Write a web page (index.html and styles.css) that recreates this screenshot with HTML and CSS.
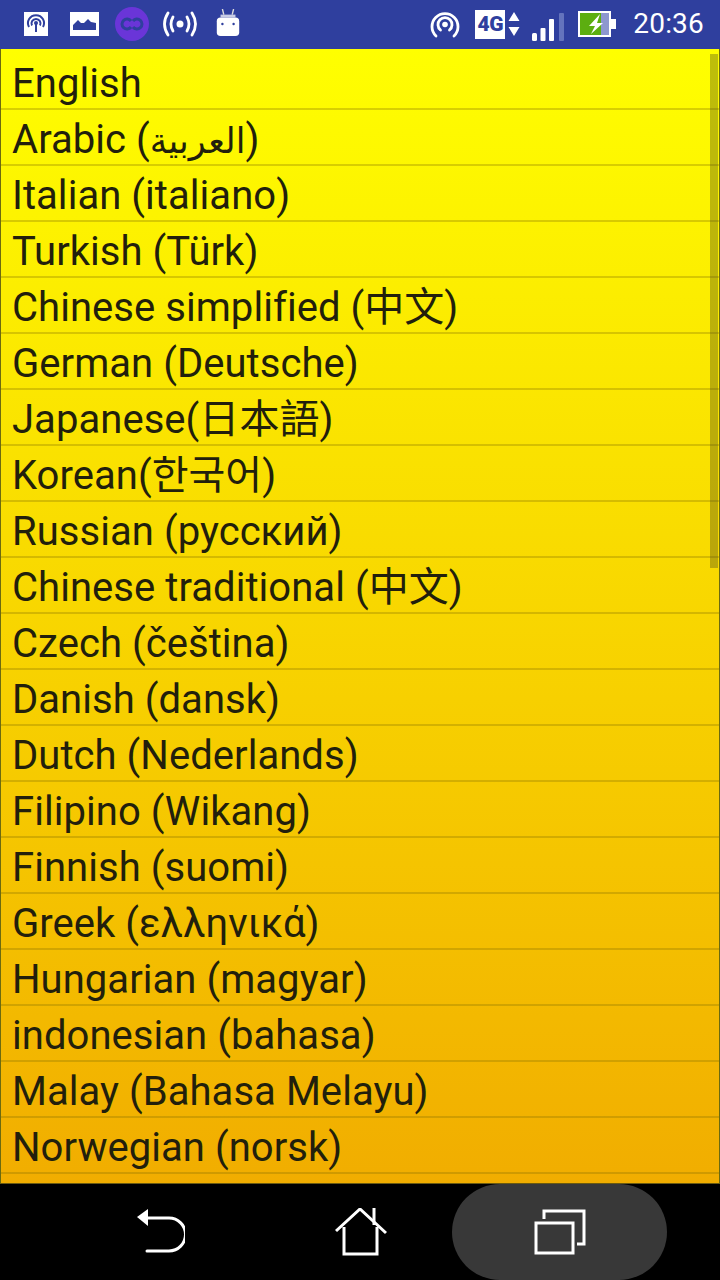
FILE: index.html
```html
<!DOCTYPE html>
<html lang="en">
<head>
<meta charset="utf-8">
<title>Languages</title>
<link rel="stylesheet" href="styles.css">
</head>
<body>
<div class="phone">
  <header class="status">
    <div class="status-left">
      <svg class="ic i1" viewBox="0 0 24 24"><rect width="24" height="24" fill="#fff"/><g fill="none" stroke="#2f3f9e" stroke-width="2"><path d="M5 15a8 8 0 1 1 14 0"/><path d="M8 13.500a4.500 4.500 0 1 1 8 0"/></g><circle cx="12" cy="11" r="2" fill="#2f3f9e"/><rect x="11" y="11" width="2" height="9" fill="#2f3f9e"/></svg>
      <svg class="ic i2" viewBox="0 0 29 24"><rect width="29" height="24" fill="#fff"/><path d="M3 18v-5l5-5 3 3h3l4-4 3 3 5 1v7z" fill="#2f3f9e"/></svg>
      <svg class="ic i3" viewBox="0 0 34 34"><circle cx="17" cy="17" r="17" fill="#6a35d8"/><g fill="none" stroke="#2f3f9e" stroke-width="3"><path d="M16 14a5 5 0 1 0 0 6"/><path d="M18 20a5 5 0 1 0 0-6"/></g></svg>
      <svg class="ic i4" viewBox="0 0 34 26"><circle cx="17" cy="13" r="3.500" fill="#fff"/><g fill="none" stroke="#fff" stroke-width="2.800" stroke-linecap="round"><path d="M10 6q-4 7 0 14"/><path d="M24 6q4 7 0 14"/><path d="M5 2q-7 11 0 22"/><path d="M29 2q7 11 0 22"/></g></svg>
      <svg class="ic i5" viewBox="0 0 24 30"><path d="M6 0l1.500 6M18 0l-1.500 6" stroke="#ddd" stroke-width="1.500"/><path d="M4 6h16v3H4z" fill="#c9cde6"/><path d="M0 13a4 4 0 0 1 4-4h16a4 4 0 0 1 4 4v12a4 4 0 0 1-4 4H4a4 4 0 0 1-4-4z" fill="#fff"/><circle cx="6" cy="16" r="1.300" fill="#2f3f9e"/><circle cx="18" cy="16" r="1.300" fill="#2f3f9e"/></svg>
    </div>
    <div class="status-right">
      <svg class="ic r1" viewBox="0 0 30 28"><g fill="none" stroke="#fff" stroke-width="2.800" stroke-linecap="round"><path d="M6 26a13 13 0 1 1 18 0"/><path d="M10.500 20a7 7 0 1 1 9 0"/></g><circle cx="15" cy="14.500" r="2.800" fill="#fff"/></svg>
      <span class="net">4G</span>
      <svg class="ic r2" viewBox="0 0 12 24"><path d="M6 0l5.500 9H.5zM6 24l5.500-9H.5z" fill="#fff"/></svg>
      <svg class="ic r3" viewBox="0 0 32 28"><g fill="#fff"><rect x="0" y="20" width="5" height="8" rx="1.500"/><rect x="8.500" y="15" width="5" height="13" rx="1"/><rect x="17" y="6" width="5" height="22" rx="1"/></g><rect x="27" y="0" width="5" height="28" rx="1" fill="#6473bd"/></svg>
      <svg class="ic r4" viewBox="0 0 38 26"><rect x="1" y="1" width="31" height="24" fill="#8d97cf" stroke="#fff" stroke-width="2"/><rect x="2" y="2" width="21" height="22" fill="#5cae10"/><rect x="32" y="8" width="6" height="10" fill="#fff"/><path d="M22 3L11 15h6l-4 8 12-11h-6z" fill="#fff"/></svg>
      <span class="time">20:36</span>
    </div>
  </header>
  <main class="panel">
    <ul class="list">
      <li>English</li>
      <li>Arabic (<span class="ar">العربية</span>)</li>
      <li>Italian (italiano)</li>
      <li>Turkish (Türk)</li>
      <li>Chinese simplified (中文)</li>
      <li>German (Deutsche)</li>
      <li>Japanese(日本語)</li>
      <li>Korean(한국어)</li>
      <li>Russian (русский)</li>
      <li>Chinese traditional (中文)</li>
      <li>Czech (čeština)</li>
      <li>Danish (dansk)</li>
      <li>Dutch (Nederlands)</li>
      <li>Filipino (Wikang)</li>
      <li>Finnish (suomi)</li>
      <li>Greek (ελληνικά)</li>
      <li>Hungarian (magyar)</li>
      <li>indonesian (bahasa)</li>
      <li>Malay (Bahasa Melayu)</li>
      <li>Norwegian (norsk)</li>
    </ul>
    <div class="thumb"></div>
  </main>
  <nav class="navbar">
    <svg class="nav back" viewBox="0 0 48 46"><path d="M0 8L11 0v17z" fill="#fff"/><path d="M10 9h22a14.500 14.500 0 0 1 0 33H10" fill="none" stroke="#fff" stroke-width="3" stroke-linecap="round"/></svg>
    <svg class="nav home" viewBox="0 0 52 48"><path d="M1 23L25 1l26 24" fill="none" stroke="#fff" stroke-width="3"/><path d="M9 19v27h33V19" fill="none" stroke="#fff" stroke-width="3"/><path d="M39 0v17" stroke="#fff" stroke-width="3"/></svg>
    <div class="recent">
      <svg class="nav rec" viewBox="0 0 52 46"><rect x="2" y="14" width="37" height="30" fill="none" stroke="#fff" stroke-width="3"/><path d="M10 10V2h40v33h-7" fill="none" stroke="#fff" stroke-width="3"/></svg>
    </div>
  </nav>
</div>
</body>
</html>
```
FILE: styles.css
```css
* { box-sizing: border-box; }
html, body { margin: 0; padding: 0; }
body { width: 720px; height: 1280px; overflow: hidden; background: #000; font-family: Roboto, "Noto Sans CJK SC", sans-serif; }
.phone { width: 720px; height: 1280px; display: flex; flex-direction: column; }
.status { height: 49px; flex: none; background: #2f3f9e; display: flex; justify-content: space-between; align-items: center; padding: 0 16px 1px 24px; }
.status-left, .status-right { display: flex; align-items: center; }
.ic { display: block; flex: none; }
.i1 { width: 24px; height: 24px; margin-right: 22px; }
.i2 { width: 29px; height: 24px; margin-right: 16px; }
.i3 { width: 34px; height: 34px; margin-right: 14px; }
.i4 { width: 34px; height: 26px; margin-right: 19px; }
.i5 { width: 24px; height: 28px; margin-top: -2px; }
.r1 { width: 30px; height: 28px; margin-right: 15px; }
.net { width: 30px; height: 29px; background: #fff; color: #2f3f9e; font: 900 21px/29px Roboto, sans-serif; text-align: center; letter-spacing: -.5px; margin-right: 3px; }
.r2 { width: 12px; height: 24px; margin-right: 12px; }
.r3 { width: 32px; height: 28px; margin-right: 14px; margin-top: 6px; }
.r4 { width: 38px; height: 26px; margin-right: 17px; }
.time { color: #fff; font-size: 28px; line-height: 32px; letter-spacing: .2px; }
.panel { position: relative; height: 1135px; flex: none; overflow: hidden; background: linear-gradient(#ffff00, #f1ad00); border-left: 1px solid #6b6a10; border-right: 1px solid #6b6a10; border-bottom: 1px solid #6b5a10; }
.list { list-style: none; margin: 0; padding: 0; color: #221f0c; font-size: 40px; letter-spacing: .05px; }
.list li { height: 56px; line-height: 54px; padding: 3px 0 0 11px; border-bottom: 2px solid rgba(130,110,0,.3); white-space: nowrap; }
.list li:first-child { height: 61px; padding-top: 8px; }
.ar { font-family: "DejaVu Sans", sans-serif; font-size: 35px; }
.thumb { position: absolute; top: 5px; right: 1px; width: 8px; height: 514px; background: rgba(70,70,30,.35); }
.navbar { flex: 1; background: #000; display: flex; align-items: center; position: relative; padding-left: 137px; }
.nav { display: block; flex: none; }
.back { width: 48px; height: 46px; margin-right: 150px; }
.home { width: 52px; height: 48px; margin-right: 65px; }
.recent { width: 215px; height: 96px; border-radius: 48px; background: #383838; display: flex; align-items: center; justify-content: center; }
.rec { width: 52px; height: 46px; }
```
